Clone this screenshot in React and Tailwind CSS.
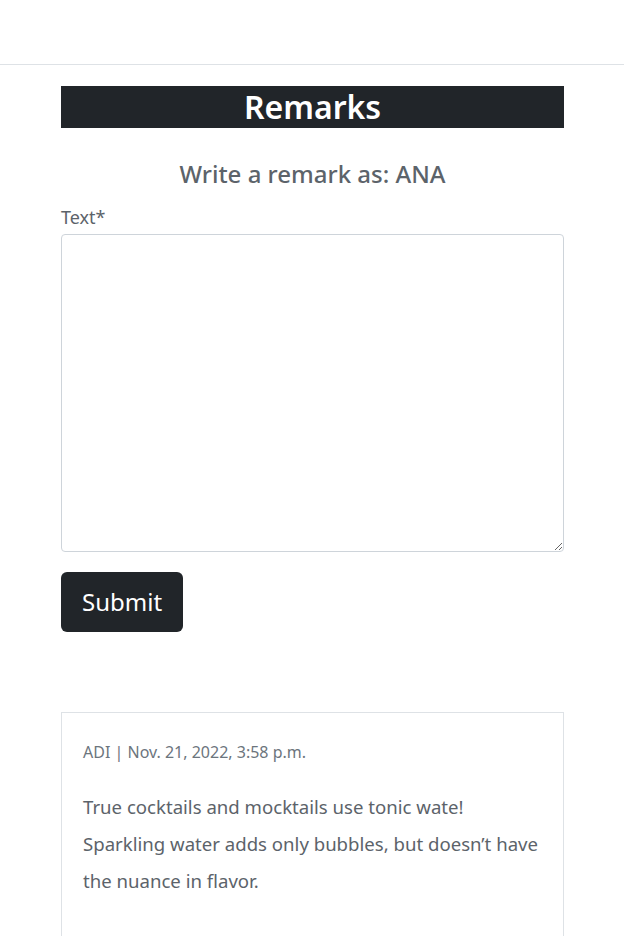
import React from 'react';

const font = { fontFamily: '"Segoe UI", "Noto Sans", "Open Sans", sans-serif' };

const RemarkCard = ({ author, date, text }) => {
  return (
    <div className="border border-[#dee2e6] px-[21px] pt-[27px] pb-[40px]">
      <p className="text-[16px] leading-[24px] text-[#6c757d] mb-[24px]">
        {author} | {date}
      </p>
      <p className="text-[18.6px] leading-[37px] text-[#5c636a]">{text}</p>
    </div>
  );
};

export default function App() {
  return (
    <div className="min-h-screen bg-white" style={font}>
      {/* empty nav area */}
      <div className="h-[65px] border-b border-[#dee2e6]"></div>

      <div className="w-[503px] ml-[61px] pt-[21px]">
        <h1 className="bg-[#212529] text-white text-center text-[32px] leading-[42px] font-semibold">
          Remarks
        </h1>

        <h3 className="text-center text-[24px] leading-[30px] font-medium text-[#5c636a] mt-[31px]">
          Write a remark as: ANA
        </h3>

        <form className="mt-[16px]">
          <label className="block text-[18px] leading-[24px] text-[#5c636a] mb-[5px]">Text*</label>
          <textarea className="block w-full h-[318px] border border-[#ced4da] rounded-[4px] resize-y"></textarea>
          <button
            type="button"
            className="mt-[20px] h-[60px] px-[21px] bg-[#212529] text-white text-[24px] rounded-[6px]"
          >
            Submit
          </button>
        </form>

        <div className="mt-[80px]">
          <RemarkCard
            author="ADI"
            date="Nov. 21, 2022, 3:58 p.m."
            text="True cocktails and mocktails use tonic wate! Sparkling water adds only bubbles, but doesn’t have the nuance in flavor."
          />
        </div>
      </div>
    </div>
  );
}
